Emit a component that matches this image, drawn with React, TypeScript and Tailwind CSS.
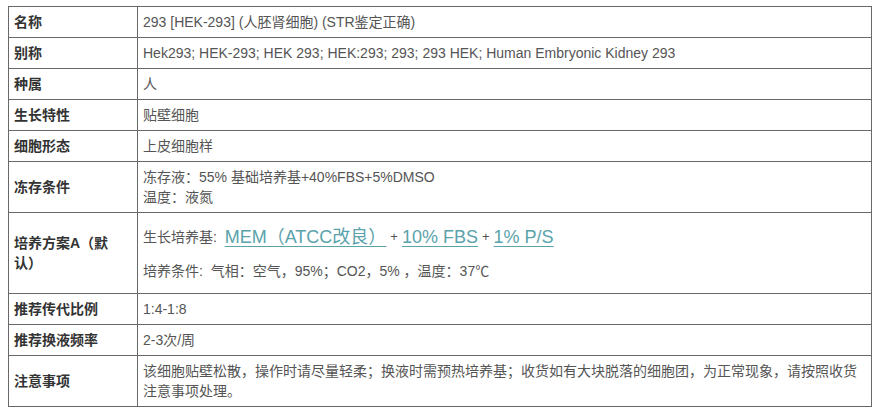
import React from "react";

const font = { fontFamily: '"Liberation Sans", Arial, "Noto Sans CJK SC", sans-serif' };

function Row({ label, children }: { label: React.ReactNode; children: React.ReactNode }) {
  return (
    <>
      <div className="flex items-center border-r border-b border-[#686868] px-[5px] py-[5px] font-bold text-[#333] text-[14px] leading-[20px]">
        <div>{label}</div>
      </div>
      <div className="flex items-center border-r border-b border-[#686868] px-[5px] py-[5px] text-[#555] text-[14px] leading-[20px]">
        <div className="w-full">{children}</div>
      </div>
    </>
  );
}

export default function App() {
  return (
    <div className="w-[883px] h-[412px] bg-white pt-[6px] pl-[8px]" style={font}>
      <div className="grid grid-cols-[129px_734px] w-[864px] border-l border-t border-[#686868]">
        <Row label="名称">293 [HEK-293] (人胚肾细胞) (STR鉴定正确)</Row>
        <Row label="别称">Hek293; HEK-293; HEK 293; HEK:293; 293; 293 HEK; Human Embryonic Kidney 293</Row>
        <Row label="种属">人</Row>
        <Row label="生长特性">贴壁细胞</Row>
        <Row label="细胞形态">上皮细胞样</Row>
        <Row label="冻存条件">
          冻存液：55% 基础培养基+40%FBS+5%DMSO
          <br />
          温度：液氮
        </Row>
        <div className="flex items-center border-r border-b border-[#686868] px-[5px] font-bold text-[#333] text-[14px] leading-[20px] h-[81px]">
          <div>
            培养方案A（默
            <br />
            认）
          </div>
        </div>
        <div className="flex flex-col border-r border-b border-[#686868] px-[5px] pt-[9px] text-[#555] text-[14px] h-[81px]">
          <div className="flex items-center h-[30px] whitespace-nowrap">
            <span>生长培养基:&nbsp;&nbsp;</span>
            <span className="text-[18px] text-[#5aa3ab] underline underline-offset-[3px] decoration-[1px]">MEM（ATCC改良）</span>
            <span className="text-[13px] mx-[4px]">+</span>
            <span className="text-[18px] text-[#5aa3ab] underline underline-offset-[3px] decoration-[1px]">10% FBS</span>
            <span className="text-[13px] mx-[4px]">+</span>
            <span className="text-[18px] text-[#5aa3ab] underline underline-offset-[3px] decoration-[1px]">1% P/S</span>
          </div>
          <div className="mt-[9px] h-[20px] leading-[20px] whitespace-pre">培养条件:  气相：空气，95%；CO2，5% ，温度：37℃</div>
        </div>
        <Row label="推荐传代比例">1:4-1:8</Row>
        <Row label="推荐换液频率">2-3次/周</Row>
        <Row label="注意事项">
          <span>
            该细胞贴壁松散，操作时请尽量轻柔；换液时需预热培养基；收货如有大块脱落的细胞团，为正常现象，请按照收货
            <br />
            注意事项处理。
          </span>
        </Row>
      </div>
    </div>
  );
}
